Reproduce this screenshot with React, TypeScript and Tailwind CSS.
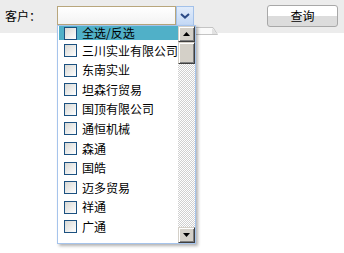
import React from 'react';

const customers = [
  '三川实业有限公司',
  '东南实业',
  '坦森行贸易',
  '国顶有限公司',
  '通恒机械',
  '森通',
  '国皓',
  '迈多贸易',
  '祥通',
  '广通',
];

function CheckBox() {
  return (
    <span className="block w-[13px] h-[13px] shrink-0 border border-[#1c5180] bg-linear-to-br from-[#d8d8d4] to-white" />
  );
}

function ScrollButton({ dir }: { dir: 'up' | 'down' }) {
  return (
    <div className="h-[16px] flex items-center justify-center bg-[#d4d0c8] border border-t-[#d4d0c8] border-l-[#d4d0c8] border-r-[#404040] border-b-[#404040] shadow-[inset_1px_1px_#ffffff,inset_-1px_-1px_#808080]">
      <svg width="7" height="4" viewBox="0 0 7 4">
        {dir === 'up' ? (
          <polygon points="3.5,0 7,4 0,4" fill="#000" />
        ) : (
          <polygon points="0,0 7,0 3.5,4" fill="#000" />
        )}
      </svg>
    </div>
  );
}

export default function App(): React.ReactElement {
  return (
    <div className="w-[344px] h-[253px] bg-white overflow-hidden font-['Noto_Sans_CJK_SC',sans-serif] text-[12px] text-black">
      {/* 查询条件 */}
      <div className="h-[33px] bg-[#ececec] flex items-start">
        <label className="w-[52px] ml-[5px] mt-[8px] leading-[16px] shrink-0">客户：</label>

        <div className="relative mt-[6px] flex items-start">
          <div className="w-[119px] h-[19px] border border-[#b8a67c] bg-linear-to-b from-white to-[#f3f3f3]" />
          <div className="w-[18px] h-[20px] flex items-center justify-center border border-[#a3c1e9] bg-linear-to-b from-[#e1ecfb] to-[#c3d8f5]">
            <svg width="10" height="6" viewBox="0 0 10 6">
              <polyline points="1,1 5,4.6 9,1" fill="none" stroke="#2b4a86" strokeWidth="2" />
            </svg>
          </div>

          {/* 后面被遮住的小框 */}
          <svg className="absolute left-[136px] top-[21px]" width="25" height="8" viewBox="0 0 25 8">
            <polygon points="0.5,0.5 20,0.5 24.5,7.5 0.5,7.5" fill="#fafafa" stroke="#c4c4c4" />
            <polygon points="19,1 24,7 19,7" fill="#e2e2e2" />
          </svg>

          {/* 下拉列表 */}
          <div className="absolute left-0 top-[19px] z-10 w-[139px] h-[219px] border border-[#a6c4ec] bg-white flex shadow-[2px_2px_3px_rgba(0,0,0,0.3)]">
            <div className="flex-1 pl-[1px]">
              <div className="h-[14px] mb-[1px] bg-[#50b0c8] flex items-center pl-[5px] gap-[5px]">
                <CheckBox />
                <span className="whitespace-nowrap leading-none">全选/反选</span>
              </div>
              {customers.map((c) => (
                <div key={c} className="h-[19.55px] flex items-center pl-[5px] gap-[5px]">
                  <CheckBox />
                  <span className="whitespace-nowrap leading-none">{c}</span>
                </div>
              ))}
            </div>
            <div className="w-[17px] flex flex-col">
              <ScrollButton dir="up" />
              <div className="h-[22px] bg-[#d4d0c8] border border-t-[#d4d0c8] border-l-[#d4d0c8] border-r-[#404040] border-b-[#404040] shadow-[inset_1px_1px_#ffffff,inset_-1px_-1px_#808080]" />
              <div className="flex-1 bg-[image:repeating-conic-gradient(#d0d0d0_0%_25%,#ffffff_0%_50%)] bg-[length:2px_2px]" />
              <ScrollButton dir="down" />
            </div>
          </div>
        </div>

        <button
          type="button"
          className="ml-auto mr-[6px] mt-[5px] w-[71px] h-[22px] rounded-[3px] border border-[#a8a8a8] bg-linear-to-b from-white from-50% to-[#dcdcdc] to-50% leading-[20px] text-[12px]"
        >
          查询
        </button>
      </div>
    </div>
  );
}
